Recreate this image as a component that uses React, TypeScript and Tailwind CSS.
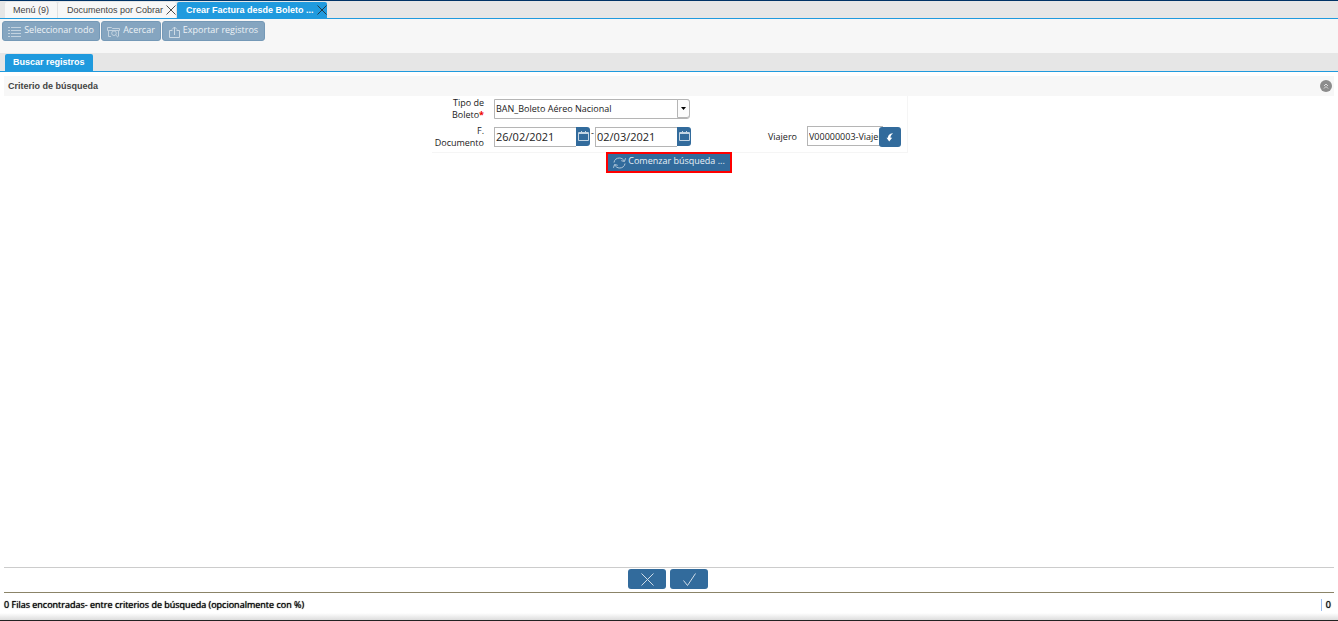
import { useState } from 'react';
import type { ReactNode } from 'react';

const tabs = [
  { id: 'menu', label: 'Menú (9)', closable: false },
  { id: 'cobrar', label: 'Documentos por Cobrar', closable: true },
  { id: 'factura', label: 'Crear Factura desde Boleto ...', closable: true },
];

function CloseIcon() {
  return (
    <svg width="10" height="10" viewBox="0 0 10 10" fill="none" stroke="currentColor" strokeWidth="0.8">
      <path d="M0.5 0.5 9.5 9.5M9.5 0.5 0.5 9.5" />
    </svg>
  );
}

function ListIcon() {
  return (
    <svg width="13" height="11" viewBox="0 0 13 11" fill="none" stroke="currentColor" strokeWidth="1" opacity="0.6">
      <path d="M0 1.5h2M3 1.5h10M0 4.5h2M3 4.5h10M0 7.5h2M3 7.5h10M0 10.5h2M3 10.5h10" />
    </svg>
  );
}

function ZoomIcon() {
  return (
    <svg width="13" height="12" viewBox="0 0 13 12" fill="none" stroke="currentColor" strokeWidth="0.9" opacity="0.65">
      <path d="M4 10.5H1.5v-6H.5v-3h4l1 1h7v2h-1v6" />
      <path d="M1.5 4.5h10" />
      <circle cx="7" cy="7.2" r="2.3" />
      <path d="m8.7 9 2.3 2.3" />
    </svg>
  );
}

function ExportIcon() {
  return (
    <svg width="11" height="12" viewBox="0 0 11 12" fill="none" stroke="currentColor" strokeWidth="1" opacity="0.7">
      <path d="M3.5 4.5h-3v7h10v-7h-3M5.5 9V1M3 3.5 5.5 1 8 3.5" />
    </svg>
  );
}

function RefreshIcon() {
  return (
    <svg width="13" height="12" viewBox="0 0 13 12" fill="none" stroke="currentColor" strokeWidth="1" opacity="0.7">
      <path d="M1 5.5C1.3 2.7 3.6 1 6.3 1c2.3 0 4 1.1 4.9 3M12.5 1.2l-1 3.3-3.2-.8" />
      <path d="M12 6.5c-.3 2.8-2.6 4.5-5.3 4.5-2.3 0-4-1.1-4.9-3M.5 10.8l1-3.3 3.2.8" />
    </svg>
  );
}

function CalendarIcon() {
  return (
    <svg width="11" height="11" viewBox="0 0 11 11" fill="none" stroke="#c3d5e4" strokeWidth="1">
      <path d="M.5 1.5h10v8H.5zM3.5 0v3M7.5 0v3" />
      <path d="M1 2.5h9" />
    </svg>
  );
}

function ToolButton({ icon, width, children }: { icon: ReactNode; width: string; children: ReactNode }) {
  return (
    <button
      type="button"
      disabled
      className={`flex h-5 items-center justify-center rounded-[3px] border border-[#7599b7] bg-[#85a5c0] text-[#edf2f6] ${width}`}
    >
      <span className="mr-[3px] pt-px">{icon}</span>
      <span className="pb-0.5">{children}</span>
    </button>
  );
}

function DateField({ label, value, onChange }: { label: string; value: string; onChange: (v: string) => void }) {
  return (
    <div className="flex h-5">
      <input
        type="text"
        aria-label={label}
        value={value}
        onChange={(e) => onChange(e.target.value)}
        className="w-[82px] border border-r-0 border-[#b5b5b5] bg-white px-px text-[11px] text-[#222]"
      />
      <button
        type="button"
        aria-label={`Abrir calendario: ${label}`}
        className="flex h-[19px] w-3.5 items-center justify-center rounded-r-[3px] bg-[#326b9c]"
      >
        <CalendarIcon />
      </button>
    </div>
  );
}

export default function App() {
  const [active, setActive] = useState('factura');
  const [desde, setDesde] = useState('26/02/2021');
  const [hasta, setHasta] = useState('02/03/2021');
  const [viajero, setViajero] = useState('V00000003-Viajero');
  const [abierto, setAbierto] = useState(true);

  return (
    <div className="flex min-h-screen flex-col border-t border-b border-t-[#003366] border-b-[#222] bg-white font-['Open_Sans',sans-serif] text-[9px] leading-3 text-[#222]">
      {/* Pestañas de ventanas */}
      <nav className="flex h-[18px] items-end border-b border-[#1f9ade] bg-[#e6e6e6] pl-[5px] font-['Liberation_Sans',sans-serif]">
        {tabs.map((tab) => (
          <div
            key={tab.id}
            className={`flex h-4 items-center rounded-t-[2px] ${
              active === tab.id ? 'bg-[#1f9ade] font-bold text-white' : 'border-r border-[#e0e0e0] bg-[#f7f7f7] text-[#444]'
            }`}
          >
            <button type="button" onClick={() => setActive(tab.id)} className={tab.closable ? 'pr-[3px] pl-[9px]' : 'px-2'}>
              {tab.label}
            </button>
            {tab.closable && (
              <button type="button" aria-label={`Cerrar ${tab.label}`} className="text-[#222]">
                <CloseIcon />
              </button>
            )}
          </div>
        ))}
      </nav>

      {/* Barra de herramientas */}
      <div className="flex h-[34px] gap-px bg-[#f7f7f7] pt-0.5 pl-0.5">
        <ToolButton icon={<ListIcon />} width="w-[98px]">Seleccionar todo</ToolButton>
        <ToolButton icon={<ZoomIcon />} width="w-[60px]">Acercar</ToolButton>
        <ToolButton icon={<ExportIcon />} width="w-[103px]">Exportar registros</ToolButton>
      </div>

      <div className="flex h-[19px] items-end border-b border-[#1f9ade] bg-[#e6e6e6] pl-[5px] font-['Liberation_Sans',sans-serif]">
        <button type="button" className="h-[17px] rounded-t-[2px] bg-[#1f9ade] px-2 pb-0.5 font-bold text-white">
          Buscar registros
        </button>
      </div>

      <main className="flex flex-1 flex-col px-1 pt-1">
        <div className="flex h-5 items-center justify-between bg-[#f7f7f7] pr-0.5 pl-1">
          <h1 className="font-['Liberation_Sans',sans-serif] font-bold text-[#444]">Criterio de búsqueda</h1>
          <button
            type="button"
            aria-label="Contraer criterios"
            onClick={() => setAbierto(!abierto)}
            className="flex size-3 items-center justify-center rounded-full bg-[#8c8c8c]"
          >
            <svg width="6" height="6" viewBox="0 0 6 6" fill="none" stroke="#ddd" strokeWidth="1">
              <path d="M1 3 3 1l2 2M1 5.5l2-2 2 2" />
            </svg>
          </button>
        </div>

        {abierto && (
          <form className="flex flex-col items-center" onSubmit={(e) => e.preventDefault()}>
            <div className="ml-0.5 grid h-[57px] w-[476px] grid-cols-[52px_197px_1fr] grid-rows-[28px_28px] gap-x-2.5 border-r border-b border-[#f5f5f5]">
              <label htmlFor="tipo" className="pt-px text-right">
                Tipo de Boleto<span className="font-bold text-[#e00]">*</span>
              </label>
              <div className="relative mt-[3px] h-5 w-[196px]">
                <select
                  id="tipo"
                  className="h-5 w-full appearance-none rounded-r-[3px] border border-[#b5b5b5] bg-white pr-3 pl-px text-[#222]"
                >
                  <option>BAN_Boleto Aéreo Nacional</option>
                </select>
                <span className="pointer-events-none absolute top-0 right-0 flex h-[19px] w-[13px] items-center justify-center rounded-r-[3px] border border-[#b5b5b5] bg-[#fcfcfc]">
                  <svg width="5" height="3" viewBox="0 0 5 3" fill="#000">
                    <path d="M0 0h5L2.5 3z" />
                  </svg>
                </span>
              </div>
              <span />

              <span className="pt-px text-right">F. Documento</span>
              <div className="flex gap-px pt-[3px]">
                <DateField label="F. Documento desde" value={desde} onChange={setDesde} />
                <span className="w-[3px]">-</span>
                <DateField label="F. Documento hasta" value={hasta} onChange={setHasta} />
              </div>
              <div className="flex items-start justify-end pt-0.5 pr-1.5">
                <label htmlFor="viajero" className="pt-[5px] pr-2.5">
                  Viajero
                </label>
                <input
                  id="viajero"
                  type="text"
                  value={viajero}
                  onChange={(e) => setViajero(e.target.value)}
                  className="-mr-1 h-5 w-[76px] border border-[#b5b5b5] bg-white pl-px text-[#222]"
                />
                <button
                  type="button"
                  aria-label="Buscar viajero"
                  className="z-10 mt-px flex h-5 w-[22px] items-center justify-center rounded-[3px] bg-[#326b9c]"
                >
                  <svg width="8" height="9" viewBox="0 0 8 9" fill="#fff">
                    <path d="M6.5.3C3.5.8 2 2.3 1.9 4.7L.5 4.8l2.700 3.700 3-3.700-1.700-.1c0-1.700.7-3 2.300-4z" />
                  </svg>
                </button>
              </div>
            </div>
            <button
              type="submit"
              className="-mt-px flex h-[21px] w-[126px] items-center justify-center border-2 border-[#f00] bg-[#326b9c] text-[#e8eff5]"
            >
              <span className="mr-0.5">
                <RefreshIcon />
              </span>
              <span className="pb-[3px]">Comenzar búsqueda ...</span>
            </button>
          </form>
        )}
      </main>

      <footer>
        <div className="mx-1 flex h-[26px] justify-center gap-1 border-t border-b border-t-[#ccc] border-b-[#8b8468] pt-px pr-0.5">
          <button type="button" aria-label="Cancelar" className="flex h-5 w-[38px] items-center justify-center rounded-[3px] bg-[#326b9c] text-[#cfdde9]">
            <svg width="13" height="13" viewBox="0 0 13 13" fill="none" stroke="currentColor" strokeWidth="1">
              <path d="m.5.5 12 12M12.5.5l-12 12" />
            </svg>
          </button>
          <button type="button" aria-label="Aceptar" className="flex h-5 w-[38px] items-center justify-center rounded-[3px] bg-[#326b9c] text-[#cfdde9]">
            <svg width="13" height="13" viewBox="0 0 13 13" fill="none" stroke="currentColor" strokeWidth="1">
              <path d="m.5 7.5 4 5 8-12" />
            </svg>
          </button>
        </div>
        <div className="flex h-5 items-center justify-between px-1 pt-1 text-black [text-shadow:0_0_1px_#000]">
          <span>0 Filas encontradas- entre criterios de búsqueda (opcionalmente con %)</span>
          <span className="border-l border-[#99bbee] pr-[3px] pl-1">0</span>
        </div>
        <div className="h-[7px] bg-linear-to-b from-white to-[#ddd]" />
      </footer>
    </div>
  );
}
